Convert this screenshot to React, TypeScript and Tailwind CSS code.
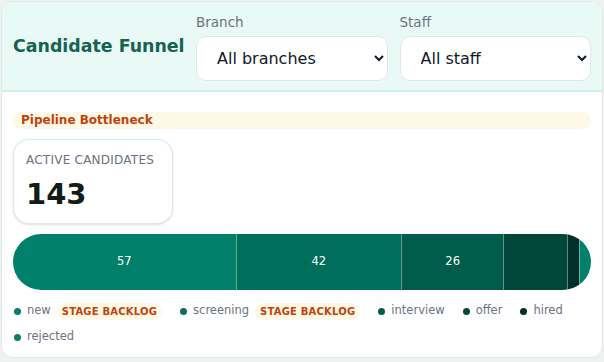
import React from "react";

type Stage = { key: string; count: number; color: string; minW?: boolean; backlog?: boolean };

const stages: Stage[] = [
  { key: "new", count: 57, color: "#00806b", backlog: true },
  { key: "screening", count: 42, color: "#006e5b", backlog: true },
  { key: "interview", count: 26, color: "#005c4b" },
  { key: "offer", count: 16, color: "#00473a" },
  { key: "hired", count: 2, color: "#003029", minW: true },
  { key: "rejected", count: 0, color: "#00806b", minW: true },
];

const dotColors: Record<string, string> = {
  new: "#0b7d68",
  screening: "#0b6d5b",
  interview: "#065a4a",
  offer: "#04473a",
  hired: "#033029",
  rejected: "#0b7d68",
};

function Field({ label, value }: { label: string; value: string }) {
  return (
    <label className="flex flex-1 flex-col gap-[4px] min-w-0">
      <span className="text-[13.5px] leading-[20px] text-[#6b7280]">{label}</span>
      <select
        defaultValue={value}
        className="h-[45px] w-full rounded-[10px] border border-[#e0e7e5] bg-white pl-[16px] pr-[4px] text-[16px] text-[#111827]"
      >
        <option>{value}</option>
      </select>
    </label>
  );
}

export default function App() {
  return (
    <div
      className="h-[362px] w-[604px] bg-[#eef3f2] p-[1px]"
      style={{ fontFamily: '"DejaVu Sans", sans-serif' }}
    >
      <div className="flex h-[357px] flex-col overflow-hidden rounded-[12px] border border-[#e1e8e6] bg-white">
        <div className="flex items-center gap-[12px] border-b-2 border-[#c9f1e8] bg-[#e9f9f5] pl-[11px] pr-[11px] pt-[10px] pb-[9px]">
          <h1 className="w-[171px] shrink-0 whitespace-nowrap text-[17.4px] font-bold text-[#17634f]">
            Candidate Funnel
          </h1>
          <Field label="Branch" value="All branches" />
          <Field label="Staff" value="All staff" />
        </div>

        <div className="flex flex-col px-[11px] pt-[20px]">
          <div className="rounded-full bg-[#fef9e7] pl-[8px] text-[12px] font-bold leading-[17px] text-[#c2410c]">
            Pipeline Bottleneck
          </div>

          <div className="mt-[10px] h-[85px] w-[160px] rounded-[16px] border border-[#e3e8e7] border-t-[#c9f1e8] bg-white px-[12px] pt-[12px] shadow-sm">
            <div className="text-[12px] leading-[16px] tracking-[0.02em] text-[#6b7280]">ACTIVE CANDIDATES</div>
            <div className="mt-[8px] text-[29px] font-bold leading-[36px] text-[#111b17]">143</div>
          </div>

          <div className="mt-[10px] flex h-[56px] overflow-hidden rounded-full">
            {stages.map((s, i) => (
              <div
                key={s.key}
                className={`flex items-center justify-center text-[11.5px] text-white ${
                  i > 0 ? "border-l border-[#ffffff66]" : ""
                } ${s.minW ? "w-[12px] shrink-0" : "basis-0"}`}
                style={{ backgroundColor: s.color, flexGrow: s.minW ? 0 : s.count }}
              >
                {s.count >= 20 ? s.count : ""}
              </div>
            ))}
          </div>

          <div className="mt-[12px] flex flex-wrap items-center gap-x-[18px] gap-y-[8px] pl-[1px] text-[11.5px] text-[#6b7280]">
            {stages.map((s) => (
              <div key={s.key} className="flex h-[18px] items-center gap-[6px]">
                <span className="h-[7px] w-[7px] rounded-full" style={{ backgroundColor: dotColors[s.key] }} />
                <span>{s.key}</span>
                {s.backlog && (
                  <span className="rounded-full bg-[#fef9e7] px-[5px] text-[10px] font-bold leading-[17px] tracking-[0.02em] text-[#c2410c]">
                    STAGE BACKLOG
                  </span>
                )}
              </div>
            ))}
          </div>
        </div>
      </div>
    </div>
  );
}
